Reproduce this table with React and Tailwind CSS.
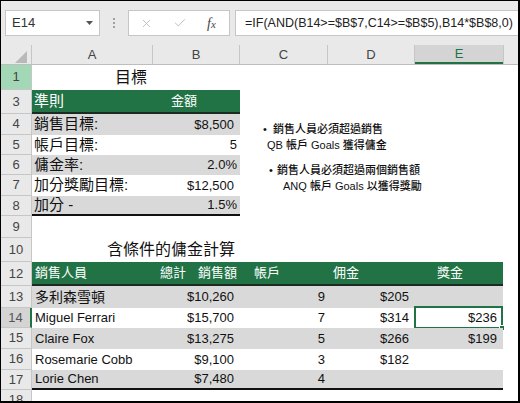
import React from 'react';
import { X, Check } from 'lucide-react';

const A = 'w-[121px]';
const B = 'w-[87px]';
const Cc = 'w-[88px]';
const D = 'w-[87px]';
const E = 'w-[88px]';

const headDefault = 'bg-[#e9e9e9] border-r border-b border-[#c6c6c6] text-[#444]';

function Row({ n, h, head = headDefault, children }) {
  return (
    <div className={`flex shrink-0 ${h}`}>
      <div className={`w-[31px] shrink-0 flex items-center justify-center text-[13px] ${head}`}>{n}</div>
      <div className="flex flex-1 relative">{children}</div>
    </div>
  );
}

function Cell({ w, className = '', children }) {
  return <div className={`${w} shrink-0 h-full flex items-center whitespace-nowrap ${className}`}>{children}</div>;
}

const band = 'bg-[#d9d9d9]';
const money = 'justify-end pr-[6px] text-[13px]';
const num = 'justify-end pr-[3px] text-[13px]';

function GoalRow({ n, h, label, value, cur, fill, last }) {
  const edge = last ? 'border-b-2 border-[#111]' : '';
  return (
    <Row n={n} h={h}>
      <Cell w={A} className={`pl-[2px] text-[15px] ${fill ? band : ''} ${edge}`}>{label}</Cell>
      <Cell w={B} className={`${cur ? money : num} ${fill ? band : ''} ${edge}`}>{value}</Cell>
    </Row>
  );
}

function SalesRow({ n, h, name, cjk, total, acc, comm, bonus, fill, last, head, selected }) {
  const bg = fill ? band : '';
  const edge = last ? 'border-b-2 border-[#111]' : '';
  return (
    <Row n={n} h={h} head={head}>
      <Cell w={A} className={`pl-[3px] ${cjk ? 'text-[14px]' : 'text-[13px]'} ${bg} ${edge}`}>{name}</Cell>
      <Cell w={B} className={`${money} ${bg} ${edge}`}>{total}</Cell>
      <Cell w={Cc} className={`${num} ${bg} ${edge}`}>{acc}</Cell>
      <Cell w={D} className={`${money} ${bg} ${edge}`}>{comm}</Cell>
      <Cell w={E} className={`${money} relative ${bg} ${edge}`}>
        {bonus}
        {selected && (
          <div className="absolute -top-[2px] -left-[1px] right-0 -bottom-[1px] border-2 border-[#217346]">
            <div className="absolute -right-[4px] -bottom-[4px] w-[6px] h-[6px] bg-[#217346] border border-white" />
          </div>
        )}
      </Cell>
    </Row>
  );
}

export default function App() {
  return (
    <div className="w-[520px] h-[403px] overflow-hidden relative flex flex-col bg-white border-l border-t border-r-2 border-b-2 border-black text-[#111] font-['Liberation_Sans','Noto_Sans_CJK_TC',sans-serif]">
      {/* formula bar */}
      <div className="h-[44px] shrink-0 flex items-center bg-[#e9e9e9] pl-[4px]">
        <div className="w-[95px] h-[26px] bg-white border border-[#c6c6c6] flex items-center justify-between pl-[6px] pr-[6px] text-[13px] text-[#333]">
          <span>E14</span>
          <svg width="7" height="4" viewBox="0 0 7 4">
            <path d="M0 0h7L3.5 4z" fill="#555" />
          </svg>
        </div>
        <div className="ml-[13px] flex flex-col gap-[2px]">
          <div className="w-[2px] h-[2px] bg-[#a0a0a0]" />
          <div className="w-[2px] h-[2px] bg-[#a0a0a0]" />
          <div className="w-[2px] h-[2px] bg-[#a0a0a0]" />
        </div>
        <div className="ml-[13px] w-[102px] h-[26px] bg-white border border-[#c6c6c6] flex items-center pl-[11px]">
          <X size={13} strokeWidth={1.5} color="#b5b5b5" />
          <Check size={14} strokeWidth={1.5} color="#b5b5b5" className="ml-[20px]" />
          <span className="ml-[20px] font-['Liberation_Serif',serif] italic text-[14px] text-[#444]">
            f<span className="text-[11px]">x</span>
          </span>
        </div>
        <div className="ml-[5px] flex-1 h-[26px] bg-white border border-r-0 border-[#c6c6c6] flex items-center pl-[9px] text-[12.5px] text-[#222] whitespace-nowrap overflow-hidden">
          =IF(AND(B14&gt;=$B$7,C14&gt;=$B$5),B14*$B$8,0)
        </div>
      </div>

      {/* column headers */}
      <div className="h-[20px] shrink-0 flex bg-[#e9e9e9] border-b border-[#bdbdbd] text-[13px] text-[#444]">
        <div className="w-[31px] shrink-0 border-r border-[#c6c6c6] flex items-end justify-end pr-[4px] pb-[1px]">
          <svg width="12" height="12" viewBox="0 0 12 12">
            <path d="M12 0V12H0z" fill="#b9b9b9" />
          </svg>
        </div>
        <div className={`${A} shrink-0 border-r border-[#c6c6c6] flex items-center justify-center`}>A</div>
        <div className={`${B} shrink-0 border-r border-[#c6c6c6] flex items-center justify-center`}>B</div>
        <div className={`${Cc} shrink-0 border-r border-[#c6c6c6] flex items-center justify-center`}>C</div>
        <div className={`${D} shrink-0 border-r border-[#c6c6c6] flex items-center justify-center`}>D</div>
        <div className={`${E} shrink-0 bg-[#d4d4d4] border-b-2 border-[#217346] flex items-center justify-center text-[#217346]`}>E</div>
        <div className="flex-1 border-l border-[#c6c6c6]" />
      </div>

      {/* goals table */}
      <Row n="1" h="h-[25px]" head="bg-[#a3d8b6] border-r border-b border-[#c6c6c6] text-[#444]">
        <Cell w="w-[208px]" className="pl-[83px] text-[16px]">目標</Cell>
      </Row>
      <Row n="3" h="h-[24px]">
        <Cell w={A} className="pl-[2px] text-[15px] text-white bg-[#217346] border-b-2 border-[#1c2b22]">準則</Cell>
        <Cell w={B} className="pl-[18px] text-[13px] text-white bg-[#217346] border-b-2 border-[#1c2b22]">金額</Cell>
      </Row>
      <GoalRow n="4" h="h-[21px]" label="銷售目標:" value="$8,500" cur fill />
      <GoalRow n="5" h="h-[20px]" label="帳戶目標:" value="5" />
      <GoalRow n="6" h="h-[20px]" label="傭金率:" value="2.0%" fill />
      <GoalRow n="7" h="h-[21px]" label="加分獎勵目標:" value="$12,500" cur />
      <GoalRow n="8" h="h-[20px]" label="加分 -" value="1.5%" fill last />
      <Row n="9" h="h-[22px]" />
      <Row n="10" h="h-[24px]">
        <Cell w="w-[208px]" className="pl-[75px] text-[16px]">含條件的傭金計算</Cell>
      </Row>

      {/* sales table */}
      <Row n="12" h="h-[24px]">
        <Cell w={A} className="pl-[3px] text-[13px] text-white bg-[#217346] border-b-2 border-[#1c2b22]">銷售人員</Cell>
        <Cell w={B} className="justify-end pr-[3px] text-[13px] text-white bg-[#217346] border-b-2 border-[#1c2b22]">
          總計<span className="ml-[12px]">銷售額</span>
        </Cell>
        <Cell w={Cc} className="pl-[14px] text-[13px] text-white bg-[#217346] border-b-2 border-[#1c2b22]">帳戶</Cell>
        <Cell w={D} className="pl-[5px] text-[13px] text-white bg-[#217346] border-b-2 border-[#1c2b22]">佣金</Cell>
        <Cell w={E} className="pl-[22px] text-[13px] text-white bg-[#217346] border-b-2 border-[#1c2b22]">獎金</Cell>
      </Row>
      <SalesRow n="13" h="h-[22px]" name="多利森雪頓" cjk total="$10,260" acc="9" comm="$205" fill />
      <SalesRow
        n="14"
        h="h-[20px]"
        name="Miguel Ferrari"
        total="$15,700"
        acc="7"
        comm="$314"
        bonus="$236"
        selected
        head="bg-[#d4d4d4] border-b border-b-[#c6c6c6] border-r-2 border-r-[#217346] text-[#555]"
      />
      <SalesRow n="15" h="h-[21px]" name="Claire Fox" total="$13,275" acc="5" comm="$266" bonus="$199" fill />
      <SalesRow n="16" h="h-[21px]" name="Rosemarie Cobb" total="$9,100" acc="3" comm="$182" />
      <SalesRow n="17" h="h-[20px]" name="Lorie Chen" total="$7,480" acc="4" fill last />
      <Row n="18" h="h-[21px]" />

      {/* floating text box */}
      <div className="absolute left-[261px] top-[120px] text-[11px] leading-[16px] font-medium text-[#111] whitespace-nowrap">
        <div className="pl-[1px]">
          <span className="inline-block w-[10px]">•</span>銷售人員必須超過銷售
        </div>
        <div className="pl-[5px]">QB 帳戶 Goals 獲得傭金</div>
        <div className="mt-[9px] pl-[7px]">
          <span className="inline-block w-[8px]">•</span>銷售人員必須超過兩個銷售額
        </div>
        <div className="pl-[21px]">ANQ 帳戶 Goals 以獲得獎勵</div>
      </div>
    </div>
  );
}
